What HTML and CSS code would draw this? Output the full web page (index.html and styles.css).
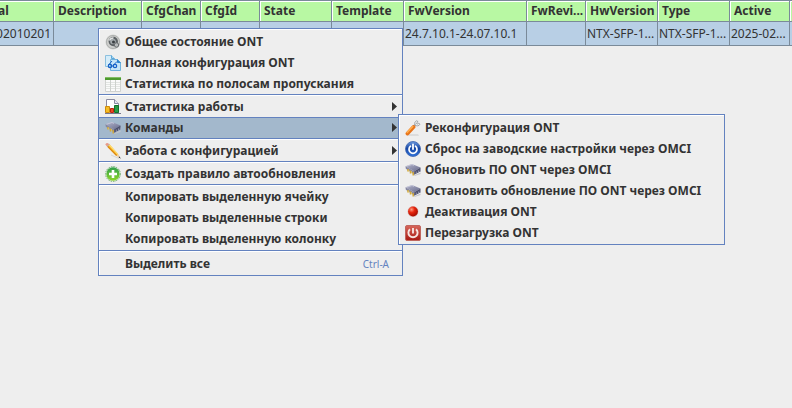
FILE: index.html
```html
<!DOCTYPE html>
<html lang="ru">
<head>
    <meta charset="UTF-8">
    <meta name="viewport" content="width=device-width, initial-scale=1.0">
    <title>ONT</title>
    <link rel="stylesheet" href="styles.css">
</head>
<body>
    <!-- Общие изображения -->
    <svg class="defs" aria-hidden="true">
        <defs>
            <linearGradient id="g-top" x1="0" y1="0" x2="1" y2="1">
                <stop offset="0" stop-color="#b4b5cc"/>
                <stop offset="1" stop-color="#686b8c"/>
            </linearGradient>
            <linearGradient id="g-blue" x1="0" y1="0" x2="0" y2="1">
                <stop offset="0" stop-color="#6f9ce0"/>
                <stop offset=".45" stop-color="#1646a4"/>
                <stop offset="1" stop-color="#2f74dc"/>
            </linearGradient>
            <linearGradient id="g-green" x1="0" y1="0" x2="0" y2="1">
                <stop offset="0" stop-color="#2f9f4c"/>
                <stop offset="1" stop-color="#8fd62a"/>
            </linearGradient>
            <linearGradient id="g-red" x1="0" y1="0" x2="0" y2="1">
                <stop offset="0" stop-color="#d8685c"/>
                <stop offset="1" stop-color="#a81812"/>
            </linearGradient>
            <radialGradient id="g-ball" cx=".35" cy=".3" r=".7">
                <stop offset="0" stop-color="#ff9a80"/>
                <stop offset=".45" stop-color="#e6260e"/>
                <stop offset="1" stop-color="#a80c00"/>
            </radialGradient>
            <symbol id="chip" viewBox="0 0 16 16">
                <path d="M9 13.500l6.500-3v1.500l-6 2z" fill="#c4c4c8"/>
                <path d="M.5 4.200L7 2l8.500 3.500-6.300 3.700z" fill="url(#g-top)"/>
                <path d="M.5 4.200l8.700 5v3.300L.8 6.800z" fill="#8788a2"/>
                <path d="M9.200 9.200l6.300-3.700v3.800l-6.300 3.400z" fill="#4c4e6c"/>
                <path d="M1.500 4.300L7 2.500l2 .9" stroke="#cdcee0" stroke-width=".8" fill="none"/>
                <path d="M3 7v2.500M5.500 8.500v3M8.200 10v3.500" stroke="#cfa63a" stroke-width="1.500"/>
                <path d="M3.800 7.500v2M6.400 9v2.300" stroke="#f0d468" stroke-width=".7"/>
                <path d="M11.300 9.500v2.500M13.500 8.500v2.300M15.300 7.500v2.300" stroke="#a0a1b6" stroke-width=".8"/>
            </symbol>
        </defs>
    </svg>

    <div class="table-view">
        <table class="ont-table">
            <colgroup>
                <col class="col-serial">
                <col class="col-description">
                <col class="col-short">
                <col class="col-short">
                <col class="col-middle">
                <col class="col-middle">
                <col class="col-version">
                <col class="col-short">
                <col class="col-middle">
                <col class="col-middle">
                <col class="col-active">
                <col class="col-middle">
            </colgroup>
            <thead>
                <tr>
                    <th>al</th>
                    <th>Description</th>
                    <th>CfgChan</th>
                    <th>CfgId</th>
                    <th>State</th>
                    <th>Template</th>
                    <th>FwVersion</th>
                    <th>FwRevi...</th>
                    <th>HwVersion</th>
                    <th>Type</th>
                    <th>Active</th>
                    <th></th>
                </tr>
            </thead>
            <tbody>
                <tr>
                    <td class="serial">02010201</td>
                    <td></td>
                    <td></td>
                    <td></td>
                    <td></td>
                    <td></td>
                    <td>24.7.10.1-24.07.10.1</td>
                    <td></td>
                    <td>NTX-SFP-1...</td>
                    <td>NTX-SFP-1...</td>
                    <td>2025-02...</td>
                    <td></td>
                </tr>
            </tbody>
        </table>
    </div>

    <!-- Контекстное меню -->
    <div class="menu context-menu">
        <button class="menu-item">
            <svg class="icon" viewBox="0 0 16 16">
                <circle cx="8" cy="8" r="7.500" fill="#d0d1cf"/>
                <circle cx="8" cy="8" r="6.500" fill="none" stroke="#adafae"/>
                <circle cx="8.300" cy="7.500" r="4.700" fill="#5c6164"/>
                <circle cx="8" cy="7.500" r="2.800" fill="#a5abae"/>
                <circle cx="8.500" cy="8" r="1.500" fill="#3a3e42"/>
                <path d="M4.500 6.500a4 4 0 0 1 4-2.500" stroke="#e6e8e8" stroke-width="1.300" fill="none"/>
                <circle cx="11.500" cy="11" r="2.200" fill="#b9bcbd" stroke="#6a6e70"/>
            </svg>
            <span>Общее состояние ONT</span>
        </button>
        <button class="menu-item">
            <svg class="icon" viewBox="0 0 16 16">
                <path d="M.5.500h6l3 3v8h-9z" fill="#d4ecf9" stroke="#8cc0de"/>
                <path d="M6.500.500v3h3" fill="#a9d7f2" stroke="#5da6d8"/>
                <path d="M5.500 4.500h7l3 3v8h-10z" fill="#c5e5f8" stroke="#70b2dc"/>
                <path d="M12.500 4.500v3h3" fill="#2f86d0" stroke="#2f86d0"/>
                <circle cx="5" cy="11" r="1.700" fill="none" stroke="#1560c8" stroke-width="1.200"/>
                <circle cx="10" cy="11" r="1.700" fill="none" stroke="#1560c8" stroke-width="1.200"/>
                <path d="M3.500 10l3.500-4M6.700 11h1.600M8.500 10l3.500-3.500" stroke="#1560c8" fill="none"/>
            </svg>
            <span>Полная конфигурация ONT</span>
        </button>
        <button class="menu-item">
            <svg class="icon" viewBox="0 0 16 16">
                <path d="M.5 3.500h15v12h-15z" fill="#fafafa" stroke="#d0d2d0"/>
                <path d="M0 1h16v3H0z" fill="#4d9a2e"/>
                <path d="M0 1h16v1H0z" fill="#82bd62"/>
                <path d="M1 6.500h14M1 8.500h14M1 10.500h14M1 12.500h14" stroke="#e2e5e2"/>
                <path d="M5.500 4v11M10.500 4v11" stroke="#cdd1cd"/>
            </svg>
            <span>Статистика по полосам пропускания</span>
        </button>
        <hr>
        <button class="menu-item">
            <svg class="icon" viewBox="0 0 16 16">
                <path d="M1.500.500h8l4 4v10h-12z" fill="#fff" stroke="#8a8aa0"/>
                <path d="M9.500.500v4h4" fill="#e4e4f0" stroke="#8a8aa0"/>
                <path d="M.5 7.500h4v6h-4z" fill="#f5bd24" stroke="#ce8b0c"/>
                <path d="M5.500 9.500h3v4h-3z" fill="#e84b1f" stroke="#bc2410"/>
                <path d="M9.500 6.500h4v7h-4z" fill="#299b45" stroke="#12702b"/>
                <path d="M0 14.500h16" stroke="#77778c"/>
            </svg>
            <span>Статистика работы</span>
            <svg class="arrow" viewBox="0 0 5 9"><path d="M0 0l5 4.500L0 9z"/></svg>
        </button>
        <div class="submenu-holder">
            <button class="menu-item selected" aria-expanded="true">
                <svg class="icon" viewBox="0 0 16 16"><use href="#chip"/></svg>
                <span>Команды</span>
                <svg class="arrow" viewBox="0 0 5 9"><path d="M0 0l5 4.500L0 9z"/></svg>
            </button>
            <div class="menu submenu">
                <button class="menu-item">
                    <svg class="icon" viewBox="0 0 16 16">
                        <path d="M3 14.500h10l1 1H2z" fill="#c9c9c9"/>
                        <path d="M8 7l3-3" stroke="#a4a8ac" stroke-width="2"/>
                        <path d="M11.500.800a3 3 0 0 0-1.500 4 3 3 0 0 0 5-.6l-1.200-.9-1.600.8-.8-1 1.700-1.500z" fill="#eceeee" stroke="#92979b" stroke-width=".8"/>
                        <path d="M2.500 13.500L8.500 7" stroke="#e8741a" stroke-width="3.800" stroke-linecap="round"/>
                        <path d="M2.200 12.500L7.800 6.500" stroke="#ffae4c" stroke-width="1.500" stroke-linecap="round"/>
                    </svg>
                    <span>Реконфигурация ONT</span>
                </button>
                <button class="menu-item">
                    <svg class="icon" viewBox="0 0 16 16">
                        <circle cx="8" cy="8" r="7.500" fill="url(#g-blue)" stroke="#3c62ac" stroke-width=".8"/>
                        <path d="M5.500 5.200a4 4 0 1 0 5 0" stroke="#fff" stroke-width="1.700" fill="none" stroke-linecap="round"/>
                        <path d="M8 3.500v4.500" stroke="#fff" stroke-width="1.800" stroke-linecap="round"/>
                    </svg>
                    <span>Сброс на заводские настройки через OMCI</span>
                </button>
                <button class="menu-item">
                    <svg class="icon" viewBox="0 0 16 16"><use href="#chip"/></svg>
                    <span>Обновить ПО ONT через OMCI</span>
                </button>
                <button class="menu-item">
                    <svg class="icon" viewBox="0 0 16 16"><use href="#chip"/></svg>
                    <span>Остановить обновление ПО ONT через OMCI</span>
                </button>
                <button class="menu-item">
                    <svg class="icon" viewBox="0 0 16 16">
                        <circle cx="8" cy="7.500" r="5.500" fill="#dcc4c0"/>
                        <circle cx="8" cy="7.500" r="4.900" fill="url(#g-ball)"/>
                    </svg>
                    <span>Деактивация ONT</span>
                </button>
                <button class="menu-item">
                    <svg class="icon" viewBox="0 0 16 16">
                        <rect x=".5" y=".5" width="15" height="15" rx="1.500" fill="url(#g-red)" stroke="#c0665e"/>
                        <path d="M5 4.200a4.600 4.600 0 1 0 6 0" stroke="#f6e4e0" stroke-width="1.900" fill="none"/>
                        <path d="M8 3v5.500" stroke="#f6e4e0" stroke-width="1.900"/>
                    </svg>
                    <span>Перезагрузка ONT</span>
                </button>
            </div>
        </div>
        <hr>
        <button class="menu-item">
            <svg class="icon" viewBox="0 0 16 16">
                <path d="M6 12l8 3.500" stroke="#d6d6d6"/>
                <path d="M2 3.500L4.500 1.300 13.300 11.300 11.300 13z" fill="#f9ba28"/>
                <path d="M2 3.500l.9-.8 9.300 9.600-.9.700z" fill="#dc8612"/>
                <path d="M3.700 2l.8-.7 8.800 10-.8.500z" fill="#ffe07a"/>
                <path d="M.3 1.500Q1.200-.2 3 .2L4.500 1.300 2 3.500z" fill="#e89a88"/>
                <path d="M2 3.500l2.500-2.200" stroke="#b4b4b4"/>
                <path d="M11.300 13l2-1.700 2 4z" fill="#ecc99c"/>
                <path d="M13.600 14.300l1-.8 1.200 2.300z" fill="#1d1d1d"/>
            </svg>
            <span>Работа с конфигурацией</span>
            <svg class="arrow" viewBox="0 0 5 9"><path d="M0 0l5 4.500L0 9z"/></svg>
        </button>
        <hr>
        <button class="menu-item">
            <svg class="icon" viewBox="0 0 16 16">
                <circle cx="8" cy="8" r="7.400" fill="#e4f2e0" stroke="#6ea870" stroke-dasharray="1.500 1"/>
                <circle cx="8" cy="8" r="6.700" fill="url(#g-green)"/>
                <path d="M8 4v8M4 8h8" stroke="#fff" stroke-width="2.600"/>
            </svg>
            <span>Создать правило автообновления</span>
        </button>
        <hr>
        <div class="menu-group">
            <button class="menu-item text-only">Копировать выделенную ячейку</button>
            <button class="menu-item text-only">Копировать выделенные строки</button>
            <button class="menu-item text-only">Копировать выделенную колонку</button>
        </div>
        <hr>
        <button class="menu-item text-only last">
            <span>Выделить все</span>
            <kbd>Ctrl-A</kbd>
        </button>
    </div>
</body>
</html>
```

FILE: styles.css
```css
* {
    margin: 0;
    padding: 0;
    box-sizing: border-box;
}

body {
    min-height: 100vh;
    background-color: #eeeeee;
    color: #333333;
    font-family: "Noto Sans", sans-serif;
    font-size: 12px;
    overflow: hidden;
}

.defs {
    position: absolute;
    width: 0;
    height: 0;
}

/* Таблица */
.table-view {
    overflow: hidden;
}

.ont-table {
    width: 870px;
    margin-left: -8px;
    table-layout: fixed;
    border-collapse: separate;
    border-spacing: 0;
    white-space: nowrap;
}

.col-serial {
    width: 62px;
}

.col-description {
    width: 88px;
}

.col-short {
    width: 59px;
}

.col-middle {
    width: 72px;
}

.col-version {
    width: 123px;
}

.col-active {
    width: 60px;
}

.ont-table th {
    height: 22px;
    padding-left: 4px;
    background-color: #b8f8a3;
    border: solid #7a8a99;
    border-width: 1px 1px 1px 0;
    box-shadow: inset 1px 1px #ffffff;
    text-align: left;
    line-height: 20px;
}

.ont-table th:first-child {
    padding-left: 6px;
}

.ont-table td {
    height: 24px;
    padding-left: 1px;
    background-color: #b8cfe5;
    border: solid #7a8a99;
    border-width: 0 1px 1px 0;
    line-height: 23px;
}

.ont-table .serial {
    padding-right: 2px;
    text-align: right;
}

/* Меню */
.menu {
    position: absolute;
    padding: 2px 0 1px;
    background-color: #eeeeee;
    border: 1px solid #6382bf;
    box-shadow: inset 1px 1px #ffffff;
}

.context-menu {
    top: 28px;
    left: 98px;
    width: 305px;
    padding-bottom: 0;
}

.submenu-holder {
    position: relative;
}

.submenu {
    top: -3px;
    left: 299px;
    width: 327px;
    z-index: 1;
}

.menu-item {
    display: flex;
    align-items: center;
    gap: 4px;
    width: 100%;
    height: 21px;
    padding: 0 5px 0 6px;
    background: none;
    border: none;
    color: inherit;
    font: bold 12px "Noto Sans", sans-serif;
    text-align: left;
    white-space: nowrap;
}

.menu-item.selected {
    background-color: #a3b8cc;
    box-shadow: inset 0 1px #6382bf;
}

.menu-item.text-only {
    padding-left: 26px;
}

.menu-item.last {
    height: 23px;
    padding-right: 13px;
}

.menu-group {
    padding-bottom: 1px;
}

.menu hr {
    height: 2px;
    border: none;
    border-top: 1px solid #6382bf;
    background-color: #ffffff;
}

.icon {
    width: 16px;
    height: 16px;
    flex-shrink: 0;
}

.arrow {
    width: 5px;
    height: 9px;
    margin-left: auto;
    fill: #333333;
}

kbd {
    margin-left: auto;
    color: #6382bf;
    font: 10px "Noto Sans", sans-serif;
}
```
